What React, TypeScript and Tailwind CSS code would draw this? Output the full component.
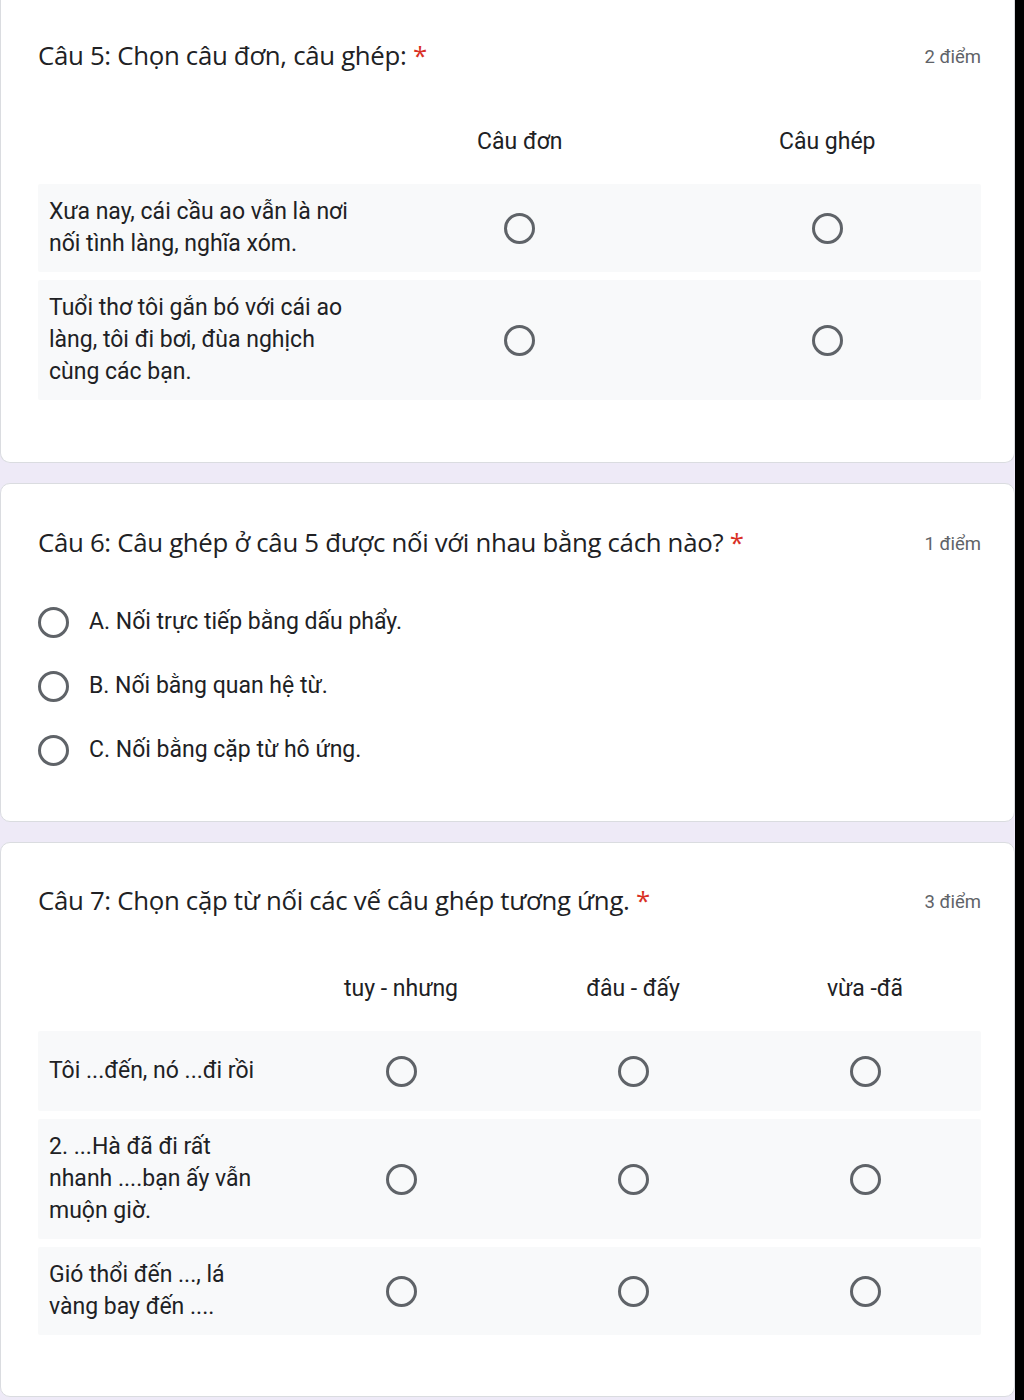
import React from "react";

const Radio = () => (
  <span className="inline-block h-[31px] w-[31px] rounded-full border-[3px] border-[#5f6368] shrink-0" />
);

const Title = ({ text, points }: { text: string; points: string }) => (
  <div className="flex items-start justify-between">
    <div className="text-[25.8px] leading-[32px] text-[#202124] font-['Open_Sans',sans-serif] tracking-[-0.3px]">
      {text} <span className="text-[#d93025]">*</span>
    </div>
    <div className="text-[18.5px] leading-[32px] text-[#5f6368] pt-[2px]">{points}</div>
  </div>
);

type GridProps = {
  labelW: number;
  cols: string[];
  rows: React.ReactNode[];
};

const Grid = ({ labelW, cols, rows }: GridProps) => (
  <div className="flex flex-col gap-2">
    <div className="flex h-[68px] items-center">
      <div style={{ width: labelW }} className="shrink-0" />
      {cols.map((c) => (
        <div key={c} className="flex-1 text-center text-[23px] text-[#202124]">
          {c}
        </div>
      ))}
    </div>
    {rows.map((r, i) => (
      <div key={i} className="flex min-h-[80px] items-center bg-[#f8f9fa] rounded-[2px]">
        <div style={{ width: labelW }} className="shrink-0 py-3 pl-[11px] pr-2 text-[23px] leading-[32px] text-[#202124]">
          {r}
        </div>
        {cols.map((c) => (
          <div key={c} className="flex flex-1 justify-center">
            <Radio />
          </div>
        ))}
      </div>
    ))}
  </div>
);

export default function App() {
  return (
    <div className="flex w-[1024px] h-[1400px] bg-black font-['Roboto',sans-serif] overflow-hidden">
      <div className="w-[1015px] bg-[#eeeaf7] flex flex-col gap-[20px] mr-[1px]">
        {/* Card 1 */}
        <div className="bg-white rounded-b-[10px] border-x border-b border-[#dadce0] pl-[37px] pr-[33px] pt-[39px] pb-[62px]">
          <Title text="Câu 5: Chọn câu đơn, câu ghép:" points="2 điểm" />
          <div className="mt-[35px]">
            <Grid
              labelW={328}
              cols={["Câu đơn", "Câu ghép"]}
              rows={[
                <>Xưa nay, cái cầu ao vẫn là nơi<br />nối tình làng, nghĩa xóm.</>,
                <>Tuổi thơ tôi gắn bó với cái ao<br />làng, tôi đi bơi, đùa nghịch<br />cùng các bạn.</>,
              ]}
            />
          </div>
        </div>
        {/* Card 2 */}
        <div className="bg-white rounded-[10px] border border-[#dadce0] pl-[37px] pr-[33px] pt-[42px] pb-[39px]">
          <Title text="Câu 6: Câu ghép ở câu 5 được nối với nhau bằng cách nào?" points="1 điểm" />
          <div className="mt-[30px] flex flex-col">
            {["A. Nối trực tiếp bằng dấu phẩy.", "B. Nối bằng quan hệ từ.", "C. Nối bằng cặp từ hô ứng."].map((t) => (
              <div key={t} className="flex h-[64px] items-center gap-[20px]">
                <Radio />
                <span className="text-[23px] text-[#202124]">{t}</span>
              </div>
            ))}
          </div>
        </div>
        {/* Card 3 */}
        <div className="bg-white rounded-[10px] border border-[#dadce0] pl-[37px] pr-[33px] pt-[41px] pb-[61px]">
          <Title text="Câu 7: Chọn cặp từ nối các vế câu ghép tương ứng." points="3 điểm" />
          <div className="mt-[37px]">
            <Grid
              labelW={247}
              cols={["tuy - nhưng", "đâu - đấy", "vừa -đã"]}
              rows={[
                <>Tôi ...đến, nó ...đi rồi</>,
                <>2. ...Hà đã đi rất<br />nhanh ....bạn ấy vẫn<br />muộn giờ.</>,
                <>Gió thổi đến ..., lá<br />vàng bay đến ....</>,
              ]}
            />
          </div>
        </div>
      </div>
    </div>
  );
}
